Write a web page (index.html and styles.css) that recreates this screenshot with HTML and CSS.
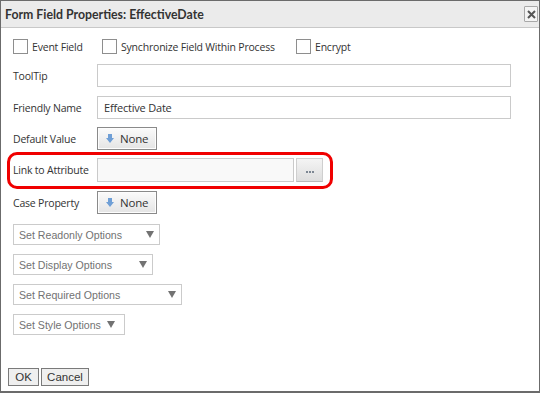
FILE: index.html
```html
<!DOCTYPE html>
<html>
<head>
<meta charset="utf-8">
<link rel="stylesheet" href="styles.css">
</head>
<body>
<div class="dialog">
  <div class="titlebar">
    <span class="title">Form Field Properties: EffectiveDate</span>
    <span class="close"><svg width="9" height="9" viewBox="0 0 9 9"><path d="M1 1 L8 8 M8 1 L1 8" stroke="#555" stroke-width="2"/></svg></span>
  </div>
  <div class="content">
    <div class="checks">
      <label class="check"><span class="box"></span>Event Field</label>
      <label class="check"><span class="box"></span>Synchronize Field Within Process</label>
      <label class="check"><span class="box"></span>Encrypt</label>
    </div>
    <div class="row r-tooltip">
      <span class="lbl">ToolTip</span>
      <span class="input wide"></span>
    </div>
    <div class="row r-friendly">
      <span class="lbl">Friendly Name</span>
      <span class="input wide">Effective Date</span>
    </div>
    <div class="row r-default">
      <span class="lbl">Default Value</span>
      <span class="nonebtn"><svg class="arrow" width="8" height="9" viewBox="0 0 8 9"><path d="M2 0 H6 V4 H8 L4 9 L0 4 H2 Z" fill="#6f9fd6"/></svg>None</span>
    </div>
    <div class="row r-link">
      <span class="lbl">Link to Attribute</span>
      <span class="input link"></span>
      <span class="ellipsis"><svg width="8" height="2" viewBox="0 0 8 2"><rect x="0" y="0" width="2" height="2" fill="#7d8793"/><rect x="3" y="0" width="2" height="2" fill="#7d8793"/><rect x="6" y="0" width="2" height="2" fill="#7d8793"/></svg></span>
    </div>
    <div class="row r-case">
      <span class="lbl">Case Property</span>
      <span class="nonebtn"><svg class="arrow" width="8" height="9" viewBox="0 0 8 9"><path d="M2 0 H6 V4 H8 L4 9 L0 4 H2 Z" fill="#6f9fd6"/></svg>None</span>
    </div>
    <div class="selects">
      <span class="select s-readonly">Set Readonly Options<span class="tri"></span></span>
      <span class="select s-display">Set Display Options<span class="tri"></span></span>
      <span class="select s-required">Set Required Options<span class="tri"></span></span>
      <span class="select s-style">Set Style Options<span class="tri"></span></span>
    </div>
  </div>
  <div class="footer">
    <span class="btn b-ok">OK</span>
    <span class="btn b-cancel">Cancel</span>
  </div>
</div>
</body>
</html>
```

FILE: styles.css
```css
html, body {
  margin: 0;
  padding: 0;
  background: #fff;
}
.dialog {
  box-sizing: border-box;
  width: 540px;
  height: 393px;
  border: 1px solid #6b6b6b;
  border-bottom-width: 2px;
  display: flex;
  flex-direction: column;
  font-family: "Open Sans", "Noto Sans", sans-serif;
  font-size: 10.5px;
  letter-spacing: -0.2px;
  color: #333;
  white-space: nowrap;
}
.titlebar {
  box-sizing: border-box;
  height: 27px;
  background: #ebebeb;
  border-bottom: 1px solid #c8c8c8;
  display: flex;
  align-items: center;
  justify-content: space-between;
  padding: 0 1px 0 4px;
}
.title {
  font-family: Lato, "Open Sans", sans-serif;
  font-weight: bold;
  font-size: 12.3px;
  letter-spacing: 0;
  color: #333;
}
.close {
  box-sizing: border-box;
  width: 14px;
  height: 16px;
  border: 1px solid #a8a8a8;
  border-radius: 1px;
  background: #f4f4f4;
  display: flex;
  align-items: center;
  justify-content: center;
}
.content {
  padding: 11px 0 0 12px;
  display: flex;
  flex-direction: column;
}
.checks {
  display: flex;
  height: 15px;
  align-items: center;
}
.check {
  display: flex;
  align-items: center;
}
.check:nth-child(1) { width: 89px; }
.check:nth-child(2) { width: 194px; }
.box {
  box-sizing: border-box;
  width: 15px;
  height: 15px;
  border: 1px solid #8e8e8e;
  background: #fff;
  margin: 0 4px 0 0;
}
.row {
  display: flex;
  align-items: center;
}
.lbl {
  width: 84px;
  flex-shrink: 0;
}
.input {
  box-sizing: border-box;
  height: 23px;
  border: 1px solid #cacaca;
  background: #fff;
  padding-left: 6px;
  line-height: 21px;
  font-size: 11px;
}
.wide { width: 414px; }
.r-tooltip { margin-top: 10px; }
.r-friendly { margin-top: 9px; }
.r-default { margin-top: 8px; }
.r-link {
  margin-top: 8px;
  position: relative;
}
.r-link::before {
  content: "";
  position: absolute;
  left: -6px;
  top: -6px;
  width: 320px;
  height: 31px;
  border: 3px solid #f00000;
  border-radius: 10px;
}
.link {
  width: 197px;
  height: 24px;
  background: #f9f9f9;
}
.ellipsis {
  box-sizing: border-box;
  width: 27px;
  height: 24px;
  margin-left: 2px;
  border: 1px solid #cfcfcf;
  border-bottom-color: #b9b9b9;
  background: linear-gradient(#f4f4f4, #dedede);
  display: flex;
  align-items: flex-end;
  justify-content: center;
  padding-bottom: 8px;
}
.r-case { margin-top: 9px; }
.nonebtn {
  box-sizing: border-box;
  width: 60px;
  height: 23px;
  border: 1px solid #8a8a8a;
  box-shadow: inset 0 0 0 1px #fdfdfd;
  background: linear-gradient(#fbfbfb, #e4e4e4);
  display: flex;
  align-items: center;
  padding-left: 8px;
  font-size: 11.5px;
  color: #333;
}
.arrow { margin-right: 6px; }
.selects {
  margin-top: 10px;
  display: flex;
  flex-direction: column;
  align-items: flex-start;
  gap: 9px;
}
.select {
  box-sizing: border-box;
  height: 21px;
  border: 1px solid #cbcbcb;
  display: flex;
  align-items: center;
  padding-left: 5px;
  font-family: "Liberation Sans", Arial, sans-serif;
  font-size: 10.6px;
  letter-spacing: 0;
  color: #727272;
}
.tri {
  width: 0;
  height: 0;
  border-left: 4px solid transparent;
  border-right: 4px solid transparent;
  border-top: 7px solid #727272;
  margin-left: auto;
  margin-right: 5px;
}
.s-readonly { width: 147px; }
.s-display { width: 140px; }
.s-required { width: 169px; }
.s-style { width: 112px; }
.s-style .tri { margin-left: 6px; }
.footer {
  margin-top: auto;
  padding: 0 0 5px 7px;
  display: flex;
  gap: 2px;
}
.btn {
  box-sizing: border-box;
  height: 18px;
  border: 1px solid #7a7a7a;
  background: #efefef;
  font-family: "Liberation Sans", Arial, sans-serif;
  font-size: 11.5px;
  letter-spacing: 0;
  line-height: 16px;
  text-align: center;
  color: #333;
}
.b-ok { width: 31px; }
.b-cancel { width: 48px; }
```
